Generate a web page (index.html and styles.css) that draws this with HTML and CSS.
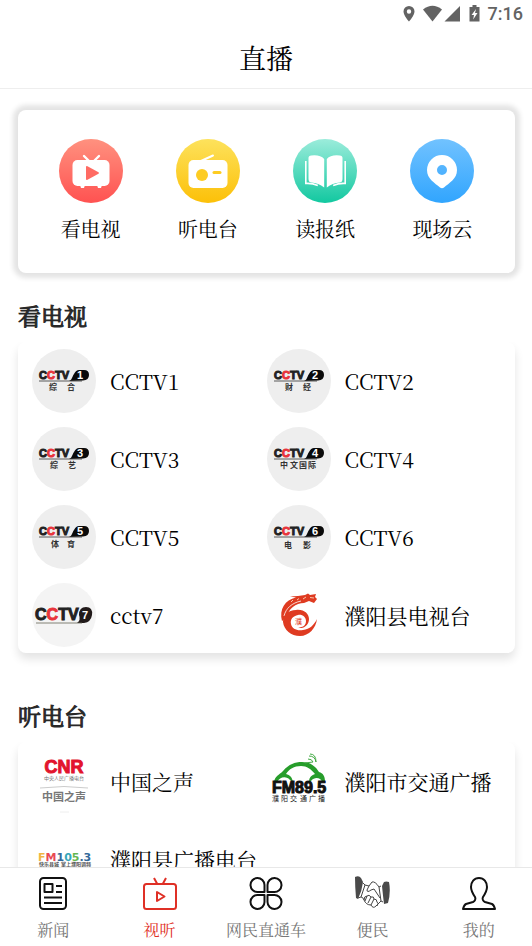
FILE: index.html
```html
<!DOCTYPE html>
<html lang="zh-CN">
<head>
<meta charset="utf-8">
<meta name="viewport" content="width=device-width, initial-scale=1">
<title>直播</title>
<link rel="stylesheet" href="styles.css">
</head>
<body>
<svg class="defs" aria-hidden="true">
  <defs>
    <linearGradient id="red" x1="0" y1="0" x2="0" y2="1"><stop offset="0" stop-color="#ff917f"/><stop offset="1" stop-color="#ff5251"/></linearGradient>
    <linearGradient id="yellow" x1="0" y1="0" x2="0" y2="1"><stop offset="0" stop-color="#fde25c"/><stop offset="1" stop-color="#fcc008"/></linearGradient>
    <linearGradient id="green" x1="0" y1="0" x2="0" y2="1"><stop offset="0" stop-color="#9becdb"/><stop offset="1" stop-color="#12c8a0"/></linearGradient>
    <linearGradient id="blue" x1="0" y1="0" x2="0" y2="1"><stop offset="0" stop-color="#71c2ff"/><stop offset="1" stop-color="#31a5fe"/></linearGradient>
    <symbol id="cctv" viewBox="0 0 64 64">
      <circle cx="32" cy="32" r="32" fill="#eee"/>
      <text class="wordmark" x="7" y="30">C<tspan class="accent">C</tspan>TV</text>
      <path d="M37 32c3-1 3-4 5-7q2-4 5-4h5q5 0 5 5t-6 5.500z" fill="#0a0a0a"/>
      <path d="M7 32H50" stroke="#333" stroke-width=".8"/>
    </symbol>
  </defs>
</svg>

<div class="status">
  <svg class="status-icons" viewBox="0 0 80 20" fill="#636363" aria-hidden="true">
    <path fill-rule="evenodd" d="M9 2a5.500 5.500 0 0 0-5.500 5.500C3.500 11.500 9 17.500 9 17.500s5.500-6 5.500-10A5.500 5.500 0 0 0 9 2zm0 3.300a2.200 2.200 0 1 1 0 4.400 2.200 2.200 0 0 1 0-4.400z"/>
    <path d="M23 5.500Q32.500-2 42 5.500L32.500 17.500z"/>
    <path d="M44.500 17.500H60V2z"/>
    <path fill-rule="evenodd" d="M69.500 3h3V1h4v2h3v14.500h-10zM76 5l-4.500 6h2.500l-.8 4.500L77.500 9H75z"/>
  </svg>
  <span class="time">7:16</span>
</div>
<header class="header"><h1>直播</h1></header>

<main class="content">
  <nav class="shortcuts" aria-label="直播">
    <a class="shortcut" href="#tv">
      <svg viewBox="0 0 64 64" aria-hidden="true"><circle cx="32" cy="32" r="32" fill="url(#red)"/><path d="M25 17l5 5M40 17l-5 5" stroke="#fff" stroke-width="2.400" stroke-linecap="round"/><rect x="13.500" y="21" width="37" height="26" rx="5" fill="#fff"/><path d="M21 46h5l-1 3h-3zM38 46h5l-1 3h-3z" fill="#fff"/><path d="M27 28v12q0 1.500 1.500.8l11-6q1-.8 0-1.600l-11-6Q27 26.500 27 28z" fill="#ff6b63"/></svg>
      <span>看电视</span>
    </a>
    <a class="shortcut" href="#radio">
      <svg viewBox="0 0 64 64" aria-hidden="true"><circle cx="32" cy="32" r="32" fill="url(#yellow)"/><path d="M25 22l12-5.500" stroke="#fff" stroke-width="2" stroke-linecap="round"/><rect x="12.500" y="21" width="39" height="28" rx="5" fill="#fff"/><circle cx="26" cy="36" r="6" fill="#fdcc22"/><path d="M38 33.500h6" stroke="#fdcc22" stroke-width="3" stroke-linecap="round"/></svg>
      <span>听电台</span>
    </a>
    <a class="shortcut" href="#paper">
      <svg viewBox="0 0 64 64" aria-hidden="true"><circle cx="32" cy="32" r="32" fill="url(#green)"/><path fill="#fff" d="M31.200 20q-4-4.500-13-3.500-2.700.2-2.700 2.500V40q0 3 2.500 3.500 7.500.7 13.200 5zM33.800 20q4-4.500 13-3.500 2.700.2 2.700 2.500V40q0 3-2.500 3.500-7.500.7-13.200 5z"/><path d="M12.800 22v22.500q6-.5 12 2M52.200 22v22.500q-6-.5-12 2" fill="none" stroke="#fff" stroke-width="1.600"/></svg>
      <span>读报纸</span>
    </a>
    <a class="shortcut" href="#live">
      <svg viewBox="0 0 64 64" aria-hidden="true"><circle cx="32" cy="32" r="32" fill="url(#blue)"/><path fill="#fff" fill-rule="evenodd" d="M32 16a15 15 0 0 0-15 15c0 9 8 13 13 17.500q2 1.500 4 0C39 44 47 40 47 31a15 15 0 0 0-15-15zm0 10a5 5 0 1 1 0 10 5 5 0 0 1 0-10z"/></svg>
      <span>现场云</span>
    </a>
  </nav>

  <section id="tv" class="section">
    <h2>看电视</h2>
    <div class="channels">
      <a class="channel" href="#cctv1"><svg viewBox="0 0 64 64" aria-hidden="true"><use href="#cctv"/><text class="digit" x="45" y="30">1</text><text class="caption" x="17" y="41">综</text><text class="caption" x="35" y="41">合</text></svg><span lang="en">CCTV1</span></a>
      <a class="channel" href="#cctv2"><svg viewBox="0 0 64 64" aria-hidden="true"><use href="#cctv"/><text class="digit" x="45" y="30">2</text><text class="caption" x="18" y="41">财</text><text class="caption" x="36" y="41">经</text></svg><span lang="en">CCTV2</span></a>
      <a class="channel" href="#cctv3"><svg viewBox="0 0 64 64" aria-hidden="true"><use href="#cctv"/><text class="digit" x="45" y="30">3</text><text class="caption" x="18" y="41">综</text><text class="caption" x="36" y="41">艺</text></svg><span lang="en">CCTV3</span></a>
      <a class="channel" href="#cctv4"><svg viewBox="0 0 64 64" aria-hidden="true"><use href="#cctv"/><text class="digit" x="45" y="30">4</text><text class="caption" x="13" y="41">中</text><text class="caption" x="23" y="41">文</text><text class="caption" x="32" y="41">国</text><text class="caption" x="41" y="41">际</text></svg><span lang="en">CCTV4</span></a>
      <a class="channel" href="#cctv5"><svg viewBox="0 0 64 64" aria-hidden="true"><use href="#cctv"/><text class="digit" x="45" y="30">5</text><text class="caption" x="19" y="42">体</text><text class="caption" x="35" y="42">育</text></svg><span lang="en">CCTV5</span></a>
      <a class="channel" href="#cctv6"><svg viewBox="0 0 64 64" aria-hidden="true"><use href="#cctv"/><text class="digit" x="45" y="30">6</text><text class="caption" x="17" y="43">电</text><text class="caption" x="36" y="43">影</text></svg><span lang="en">CCTV6</span></a>
      <a class="channel" href="#cctv7"><svg viewBox="0 0 64 64" aria-hidden="true"><circle cx="32" cy="32" r="32" fill="#f4f4f4"/><text class="wordmark large" x="3" y="37">C<tspan class="accent">C</tspan>TV</text><path d="M45 40q4-3 2-8 0-8 7-8 7 0 6 8-1 7-8 8z" fill="#211a1a"/><path d="M4 40H50" stroke="#665" stroke-width=".8"/><text class="digit" x="50" y="36">7</text></svg><span lang="en">cctv7</span></a>
      <a class="channel" href="#pyxtv">
        <svg viewBox="0 0 64 64" aria-hidden="true">
          <path fill="#df3b21" d="M15 38C12 26 18 17 29 14.500l-6-1 8-.5 7-1 3-1.500 2 1.500 6-1-1 3 2 2-3 4-5-2-5 2C29 20 21 26 20 34z"/>
          <path fill="none" stroke="#fff" stroke-width=".8" d="M17 33c2-8 8-13 17-15"/>
          <path fill="none" stroke="#f9c3a8" d="M36 16l3-2M43 14.500l4 .5M24 19l2-2M30 17l2-1.500"/>
          <path fill="#df3b21" d="M31 44c5 1 8-2 8-6s-4-7-8-6c-5 1-8 4-7 9 1 5 6 7 12 6 7-1 11-5 14-11-1 9-8 17-17 17-9 0-16-6-17-14 0-7 5-12 13-12 8-1 13 4 13 9 0 6-6 11-11 8z"/>
          <text class="seal" x="28" y="41">濮</text>
        </svg><span>濮阳县电视台</span></a>
    </div>
  </section>

  <section id="radio" class="section">
    <h2>听电台</h2>
    <div class="channels">
      <a class="channel" href="#cnr">
        <svg viewBox="0 0 64 64" aria-hidden="true"><text class="cnr" x="32" y="24">CNR</text><text class="cnr-sub" x="32" y="31">中央人民广播电台</text><path d="M8 39q24-3 48 0" fill="none" stroke="#ccc"/><text class="cnr-name" x="32" y="52">中国之声</text><path d="M28 63h9" stroke="#eee"/></svg><span>中国之声</span></a>
      <a class="channel" href="#fm895">
        <svg viewBox="0 0 64 64" aria-hidden="true"><path d="M7 33c1-6 5-7 9-11 6-7 12-9 19-9 9 0 14 5 17 10 4 1 6 4 6 10h-3c-1-4-7-6-11-1l-2 1c0-5 3-7 6-8-4-5-8-8-14-8-7 0-12 3-15 8 4 1 6 3 7 8l-3-2c-3-4-10-4-13 2z" fill="#279d2b"/><path d="M38 14l8-1M41 10q4 0 5 3M42 7q6 0 7 6M43 5q6 0 6 8" fill="none" stroke="#43aa44"/><text class="fm" x="5" y="44">FM89.5</text><text class="fm-sub" x="5" y="52">濮</text><text class="fm-sub" x="14" y="52">阳</text><text class="fm-sub" x="23" y="52">交</text><text class="fm-sub" x="33" y="52">通</text><text class="fm-sub" x="42" y="52">广</text><text class="fm-sub" x="51" y="52">播</text></svg><span>濮阳市交通广播</span></a>
      <a class="channel" href="#fm1053">
        <svg viewBox="0 0 64 64" aria-hidden="true"><text class="fm-color" x="6" y="34"><tspan fill="#f1b642">F</tspan><tspan fill="#e94955">M</tspan><tspan fill="#346a9a">1</tspan><tspan fill="#36a7b9">0</tspan><tspan fill="#64b650">5</tspan><tspan fill="#346a9a">.3</tspan></text><text class="tagline" x="7" y="39">快乐县城</text><text class="tagline" x="29" y="39">掌上濮阳调频</text></svg><span>濮阳县广播电台</span></a>
    </div>
  </section>
</main>

<nav class="tabs" aria-label="主导航">
  <a class="tab" href="#news"><svg viewBox="0 0 36 36" aria-hidden="true"><rect x="5" y="3" width="26" height="31" rx="3.500"/><path d="M9.500 9h8v8h-8zM21 11h6M21 17h6M9 22.500h18M9 28h18"/></svg><span>新闻</span></a>
  <a class="tab active" href="#av" aria-current="page"><svg viewBox="0 0 36 36" aria-hidden="true"><rect x="2" y="9" width="32" height="25" rx="2.500"/><path d="M12 3l3 5.500M24 3l-3 5.500M15 17v9l7.500-4.500z"/></svg><span>视听</span></a>
  <a class="tab" href="#direct"><svg viewBox="0 0 36 36" aria-hidden="true"><path d="M16.500 17H10a7 7 0 1 1 6.500-7zM19.500 17H26a7 7 0 1 0-6.500-7zM16.500 20H10a7 7 0 1 0 6.500 7zM19.500 20H26a7 7 0 1 1-6.500 7z"/></svg><span>网民直通车</span></a>
  <a class="tab" href="#service"><svg viewBox="0 0 36 36" aria-hidden="true"><path class="sleeve" d="M1 2q4-2 6 1l2 4q-1 9-5 17l-2-1Q1 12 1 2zM35 7q-3-1-5 0l-2 4q1 10 2 18l4-1q3-11 1-21z"/><path class="fine" d="M9 8l2 2-4 12-3 1M27 11l-2 1 2 14 2 1M11 10l4 1 3-4q3-1 7 5M15 11l-2 4q0 3 4 0l3-1 6 9M7 22q2 0 3 3 2 5 7 5 2 4 5 1l5-5M10 25q0-4 3-4 2-2 4 1 3-1 3 2 3 0 3 3 2 1 0 4M13 21l-2 5M17 22l-3 6M20 24l-3 6"/></svg><span>便民</span></a>
  <a class="tab" href="#me"><svg viewBox="0 0 36 36" aria-hidden="true"><path d="M18 3c-5 0-8 4-8 9 0 4 2 7 4 10 1 2 0 4-2 5l-7 2q-2 1-3 5h32q-1-4-3-5l-7-2c-2-1-3-3-2-5 2-3 4-6 4-10 0-5-3-9-8-9z"/></svg><span>我的</span></a>
</nav>
</body>
</html>
```

FILE: styles.css
```css
* {
  box-sizing: border-box;
}

body {
  margin: 0;
  height: 100vh;
  display: flex;
  flex-direction: column;
  overflow: hidden;
  background: #fff;
  color: #000;
  font-family: "Noto Serif CJK SC", "Noto Serif SC", "Liberation Serif", "Noto Sans CJK SC", serif;
}

a {
  color: inherit;
  text-decoration: none;
}

h1,
h2 {
  margin: 0;
}

.defs {
  position: absolute;
  width: 0;
  height: 0;
}

.status {
  flex: none;
  height: 28px;
  padding-right: 9px;
  display: flex;
  align-items: center;
  justify-content: flex-end;
  gap: 8px;
  color: #636363;
}

.status-icons {
  width: 80px;
  height: 20px;
}

.time {
  font: 500 18px/20px Roboto, sans-serif;
}

.header {
  flex: none;
  height: 61px;
  display: flex;
  align-items: center;
  justify-content: center;
  border-bottom: 1px solid #eee;
}

.header h1 {
  font-size: 27px;
  font-weight: 400;
  line-height: 36px;
}

.content {
  flex: 1;
  min-height: 0;
  padding: 21px 17px 0 18px;
  overflow-y: auto;
  scrollbar-width: none;
}

.shortcuts {
  display: grid;
  grid-template-columns: repeat(4, 1fr);
  padding: 29px 14px 30px;
  border-radius: 8px;
  box-shadow: 0 0 5px 5px #e4e4e4;
}

.shortcut {
  display: flex;
  flex-direction: column;
  align-items: center;
  gap: 12px;
  font-size: 20px;
  line-height: 28px;
}

.shortcut svg {
  width: 64px;
  height: 64px;
}

.section {
  padding-top: 27px;
}

.section + .section {
  padding-top: 47px;
}

.section h2 {
  margin-bottom: 10px;
  color: #282828;
  font-size: 23px;
  font-weight: 400;
  line-height: 32px;
  -webkit-text-stroke: 1px #282828;
}

.channels {
  display: grid;
  grid-template-columns: 1fr 1fr;
  gap: 14px 0;
  padding: 7px 14px 6px;
  border-radius: 8px;
  box-shadow: 0 6px 10px #e4e4e4;
  clip-path: inset(0 -20px -24px);
}

.channel {
  display: flex;
  align-items: center;
  gap: 14px;
  font-size: 21px;
  line-height: 30px;
  white-space: nowrap;
}

.channel svg {
  flex: none;
  width: 64px;
  height: 64px;
}

.channel svg text {
  font-family: "Liberation Sans", "Noto Sans CJK SC", sans-serif;
}

.wordmark {
  font: 700 11px "Liberation Sans", sans-serif;
  fill: #222;
  stroke: #222;
  stroke-width: 1px;
}

.wordmark.large {
  font-size: 16px;
}

.accent {
  fill: #e8343b;
  stroke: #e8343b;
}

.digit {
  font-size: 11px;
  font-weight: 700;
  fill: #fff;
}

.caption {
  font-size: 8px;
  font-weight: 700;
  fill: #333;
}

.seal {
  font-size: 7px;
  fill: #df3b21;
}

.cnr {
  font-size: 18px;
  font-weight: 700;
  fill: #e2142d;
  stroke: #e2142d;
  stroke-width: 1px;
  text-anchor: middle;
}

.cnr-sub {
  font-size: 5px;
  fill: #777;
  text-anchor: middle;
}

.cnr-name {
  font-size: 11px;
  font-weight: 700;
  fill: #777;
  text-anchor: middle;
}

.fm {
  font-size: 16px;
  font-weight: 700;
  fill: #111;
  stroke: #111;
  stroke-width: 1px;
}

.fm-sub {
  font-size: 7px;
  fill: #222;
}

.channel svg .fm-color {
  font-family: "DejaVu Sans", sans-serif;
  font-size: 11px;
  font-weight: 700;
}

.tagline {
  font-size: 5px;
  font-weight: 700;
  fill: #555;
}

.tabs {
  flex: none;
  display: grid;
  grid-template-columns: repeat(5, 1fr);
  padding: 7px 0 5px;
  border-top: 1px solid #e8e8e8;
  background: #fff;
}

.tab {
  display: flex;
  flex-direction: column;
  align-items: center;
  gap: 7px;
  color: #777;
  font-size: 16px;
  line-height: 23px;
}

.tab svg {
  width: 36px;
  height: 36px;
  fill: none;
  stroke: #111;
  stroke-width: 2;
  stroke-linejoin: round;
}

.tab .fine {
  stroke: #444;
  stroke-width: 1;
}

.tab .sleeve {
  fill: #4a4a4a;
  stroke: none;
}

.tab.active {
  color: #df3026;
}

.tab.active svg {
  stroke: #df3026;
}
```
